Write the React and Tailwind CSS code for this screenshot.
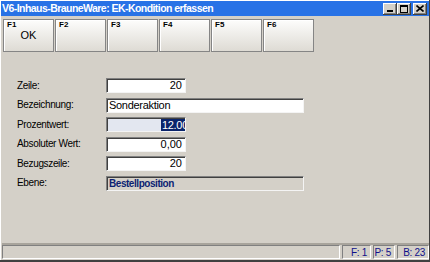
import React from "react";

const fkeys = [
  { key: "F1", label: "OK" },
  { key: "F2" },
  { key: "F3" },
  { key: "F4" },
  { key: "F5" },
  { key: "F6" },
];

function CaptionButton({ children, className = "" }) {
  return (
    <div
      className={`flex h-[12px] w-[14px] items-center justify-center bg-[#d4d0c8] shadow-[inset_-1px_-1px_#404040,inset_1px_1px_#fff,inset_-2px_-2px_#808080] ${className}`}
    >
      {children}
    </div>
  );
}

function FKey({ fkey, label }) {
  return (
    <div className="relative h-[33px] w-[51px] border border-[#858585] bg-gradient-to-b from-[#fdfdfc] to-[#dedbd4] shadow-[inset_1px_1px_#fff]">
      <span className="absolute left-[3px] top-[1px] text-[8px] font-bold leading-none text-black">{fkey}</span>
      {label && (
        <span className="absolute inset-x-0 top-[10px] text-center text-[11px] leading-none text-black">{label}</span>
      )}
    </div>
  );
}

function Field({ children, className = "", wide }) {
  return (
    <div
      className={`flex h-[15px] items-center overflow-hidden border-t border-l border-[#808080] border-r border-b border-r-[#f4f4f4] border-b-[#f4f4f4] shadow-[inset_1px_1px_#404040] ${
        wide ? "w-[198px]" : "w-[80px]"
      } ${className}`}
    >
      {children}
    </div>
  );
}

function Row({ label, children }) {
  return (
    <div className="flex items-center">
      <div className="w-[89px] text-[10px] leading-none tracking-[-0.35px] text-black">{label}</div>
      {children}
    </div>
  );
}

function Panel({ children, className = "" }) {
  return (
    <div
      className={`flex items-center justify-end whitespace-nowrap border-t border-l border-[#808080] border-r border-b border-r-white border-b-white pr-[3px] tracking-[-0.3px] ${className}`}
    >
      {children}
    </div>
  );
}

export default function App() {
  return (
    <div className="h-[262px] w-[430px] overflow-hidden bg-[#d4d0c8] font-['Liberation_Sans',Arial,sans-serif] text-black">
      <div className="flex h-full flex-col border-r border-b-2 border-r-[#404040] border-b-[#404040] shadow-[inset_1px_1px_#fff]">
        {/* title bar */}
        <div className="ml-[1px] mt-[1px] flex h-[15px] items-center justify-between bg-[#2872e6] pl-[1px] pr-[2px]">
          <span className="whitespace-nowrap text-[10.5px] font-bold leading-none tracking-[-0.55px] text-white">
            V6-Inhaus-BrauneWare: EK-Kondition erfassen
          </span>
          <div className="flex items-center">
            <CaptionButton>
              <div className="mt-[5px] h-[2px] w-[6px] bg-black" />
            </CaptionButton>
            <CaptionButton>
              <div className="h-[8px] w-[8px] border border-t-2 border-black" />
            </CaptionButton>
            <CaptionButton className="ml-[2px]">
              <svg width="8" height="7" viewBox="0 0 8 7">
                <path d="M0.5 0.5 L7.5 6.5 M7.5 0.5 L0.5 6.5" stroke="#000" strokeWidth="1.6" />
              </svg>
            </CaptionButton>
          </div>
        </div>

        {/* function keys */}
        <div className="mt-[3px] flex gap-[1px] pl-[3px]">
          {fkeys.map((f) => (
            <FKey key={f.key} fkey={f.key} label={f.label} />
          ))}
        </div>

        {/* form */}
        <div className="mt-[26px] flex flex-col gap-[4.5px] pl-[17px]">
          <Row label="Zeile:">
            <Field className="justify-end bg-white pr-[3px] text-[11px]">20</Field>
          </Row>
          <Row label="Bezeichnung:">
            <Field wide className="bg-white pl-[2px] text-[11px] tracking-[-0.3px]">
              Sonderaktion
            </Field>
          </Row>
          <Row label="Prozentwert:">
            <Field className="justify-end bg-[#e3e7f0] text-[11px]">
              <span className="mr-[-3px] whitespace-nowrap bg-[#0a246a] pl-[1px] leading-[12px] tracking-[-0.3px] text-white">12.00</span>
            </Field>
          </Row>
          <Row label="Absoluter Wert:">
            <Field className="justify-end bg-white pr-[3px] text-[11px]">0,00</Field>
          </Row>
          <Row label="Bezugszeile:">
            <Field className="justify-end bg-white pr-[3px] text-[11px]">20</Field>
          </Row>
          <Row label="Ebene:">
            <Field wide className="bg-[#d4d0c8] pl-[2px] shadow-[inset_1px_1px_#404040]">
              <span className="text-[10px] font-bold tracking-[-0.45px] text-[#0c1f72]">Bestellposition</span>
            </Field>
          </Row>
        </div>

        {/* status bar */}
        <div className="mt-auto ml-[2px] flex h-[16px] gap-[2px] border-t-2 border-[#a8a49c] text-[10px] text-[#10108a]">
          <div className="flex-1 border-t border-l border-[#808080] border-r border-b border-r-white border-b-white" />
          <Panel className="w-[29px]">F: 1</Panel>
          <Panel className="w-[22px]">P: 5</Panel>
          <Panel className="w-[32px]">B: 23</Panel>
        </div>
        <div className="h-[1px]" />
      </div>
    </div>
  );
}
